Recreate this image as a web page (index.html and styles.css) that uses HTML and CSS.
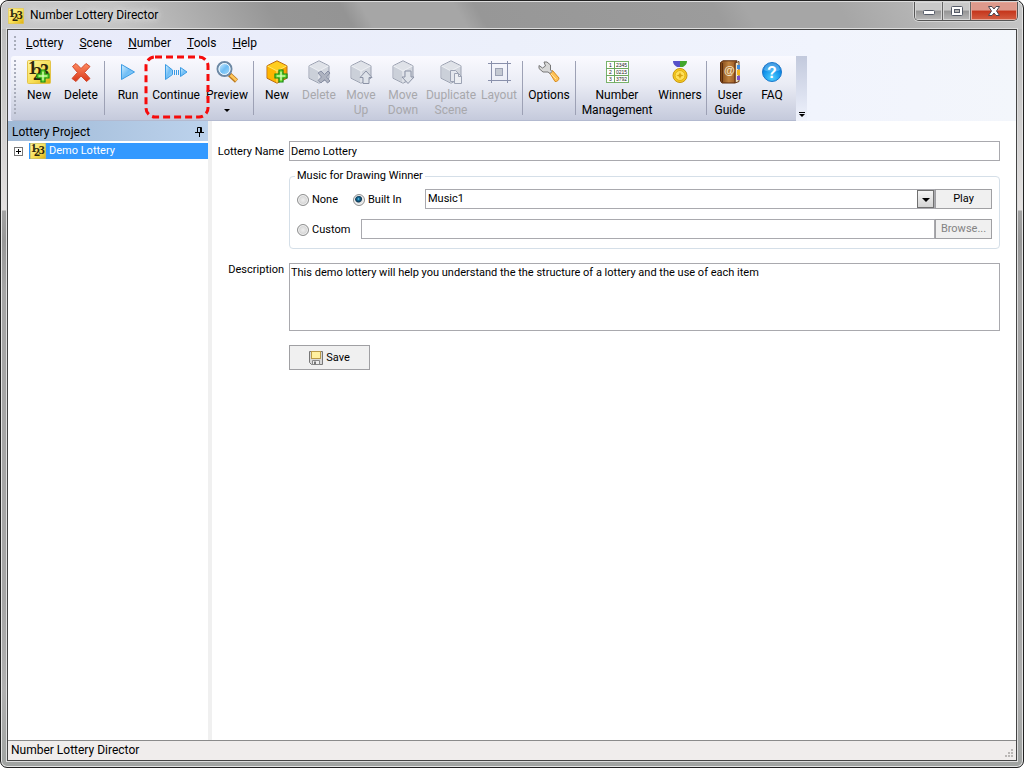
FILE: index.html
```html
<!DOCTYPE html>
<html lang="en">
<head>
<meta charset="utf-8">
<title>Number Lottery Director</title>
<link rel="stylesheet" href="styles.css">
</head>
<body>
<svg class="defs" aria-hidden="true">
  <defs>
    <linearGradient id="gold" x1="0" y1="0" x2="1" y2="1"><stop offset="0" stop-color="#fff6a0"/><stop offset=".6" stop-color="#f6dc50"/><stop offset="1" stop-color="#dcae10"/></linearGradient>
    <linearGradient id="blue" x1="0" y1="0" x2="1" y2="1"><stop offset="0" stop-color="#d4efff"/><stop offset=".5" stop-color="#6fbdf5"/><stop offset="1" stop-color="#a4dafb"/></linearGradient>
    <linearGradient id="red" x1="0" y1="0" x2="0" y2="1"><stop offset="0" stop-color="#ff8a60"/><stop offset="1" stop-color="#d8371a"/></linearGradient>
    <radialGradient id="ball" cx=".5" cy=".8" r=".8"><stop offset="0" stop-color="#4fd0ff"/><stop offset=".6" stop-color="#1292ea"/><stop offset="1" stop-color="#0868c4"/></radialGradient>
    <linearGradient id="leather" x1="0" y1="0" x2="1" y2="0"><stop offset="0" stop-color="#7b4215"/><stop offset=".5" stop-color="#c08340"/><stop offset="1" stop-color="#935020"/></linearGradient>
    <symbol id="logo" viewBox="0 0 24 24">
      <rect x=".5" y=".5" width="23" height="23" rx="1" fill="url(#gold)" stroke="#e3c44a"/>
      <g class="logo-digits"><text x="1" y="14">1</text><text x="6" y="20">2</text><text x="13" y="17">3</text></g>
    </symbol>
    <symbol id="plus" viewBox="0 0 14 14"><path d="M5 1h4v4h4v4H9v4H5V9H1V5h4z" fill="#7be23c" stroke="#158a14" stroke-width="1.2"/><path d="M7 3v8M3 7h8" stroke="#e4ffd0" stroke-width="1"/></symbol>
    <symbol id="cube" viewBox="0 0 24 24">
      <path d="M12 .8 22 5.8v12.4l-10 5-10-5V5.8z" fill="#d2d6de" stroke="#9aa0b0"/>
      <path d="M12 1.5 21.5 6 12 11 2.5 6z" fill="#dfe2e8"/><path d="M2.5 6 12 11v11.5l-9.500-4.800z" fill="#cbd0d9"/>
      <path d="M2.500 6 12 11l9.500-5M12 11v11.500" fill="none" stroke="#eef0f5"/>
    </symbol>
  </defs>
</svg>
<div class="window">
  <header class="titlebar">
    <svg class="icon-16"><use href="#logo"/></svg>
    <h1 class="title">Number Lottery Director</h1>
    <div class="caption-buttons">
      <button class="cap" aria-label="Minimize"><svg width="14" height="10"><rect x="1.500" y="4.500" width="11" height="4" rx="1" fill="#fff" stroke="#555b68"/></svg></button>
      <button class="cap" aria-label="Restore"><svg width="14" height="12"><rect x="1.500" y="1.500" width="11" height="9" rx="1" fill="#fff" stroke="#555b68"/><rect x="4.500" y="4.500" width="5" height="3" fill="#b5b5b5" stroke="#555b68"/></svg></button>
      <button class="cap cap-close" aria-label="Close"><svg width="14" height="12"><path d="M1.500 1.500h3.500l2 2.500 2-2.500h3.500L9.500 6l3 4.500H9L7 8l-2 2.500H1.500l3-4.500z" fill="#fff" stroke="#4a4650"/></svg></button>
    </div>
  </header>
  <div class="client">
    <div class="bars">
      <nav class="menubar">
        <span class="grip"></span>
        <button><u>L</u>ottery</button><button><u>S</u>cene</button><button><u>N</u>umber</button><button><u>T</u>ools</button><button><u>H</u>elp</button>
      </nav>
      <div class="toolrow">
        <div class="toolbar" role="toolbar">
          <span class="grip"></span>
          <button class="tool"><svg class="icon-24"><use href="#logo"/><use href="#plus" x="9" y="9" width="14" height="14"/></svg>New</button>
          <button class="tool"><svg class="icon-24" viewBox="0 0 24 24"><path d="M3.500 6.500 7 3.500l5 5 5-5 4 3-5.500 6 5.500 6-3.500 3L12 16l-5 5.500-4-3 5.500-6z" fill="url(#red)" stroke="#d2492c"/></svg>Delete</button>
          <span class="sep"></span>
          <button class="tool"><svg class="icon-24" viewBox="0 0 24 24"><path d="M5.500 4.500 18.500 12 5.500 19.500z" fill="url(#blue)" stroke="#3a9be4"/></svg>Run</button>
          <button class="tool tool-l"><svg class="icon-24" viewBox="0 0 24 24"><path d="M1.500 4.500 8.500 10v4.500l-7 5z" fill="url(#blue)" stroke="#3a9be4"/><path d="M10.500 10v5M12.500 10v5M14.500 10v5" stroke="#3a9be4"/><path d="M16.500 7.500 23 12l-6.500 4.500z" fill="url(#blue)" stroke="#3a9be4"/></svg>Continue
            <svg class="callout" width="66" height="64" aria-hidden="true"><rect x="2" y="2" width="62" height="60" rx="9" fill="none" stroke="#f60b0b" stroke-width="3" stroke-dasharray="7 4"/></svg></button>
          <button class="tool tool-m"><svg class="icon-24" viewBox="0 0 24 24"><path d="m14.500 14.500 7 6.500" stroke="#b9761c" stroke-width="4.500"/><path d="m15.500 15 6 5.500" stroke="#ffc75a" stroke-width="2.500"/><circle cx="9.500" cy="9" r="7" fill="#b9e2fb" stroke="#6d88a4" stroke-width="2"/><circle cx="9.500" cy="9" r="5.500" fill="url(#blue)" stroke="#f0f8ff"/></svg>Preview<span class="drop"></span></button>
          <span class="sep"></span>
          <button class="tool"><svg class="icon-24" viewBox="0 0 24 24"><path d="M12 .8 22 5.800v12.400l-10 5-10-5V5.800z" fill="#f9a500" stroke="#b86c18"/><path d="M12 1.500 21.500 6 12 11 2.500 6z" fill="#ffce20"/><path d="M2.500 6 12 11v11.500l-9.500-4.800z" fill="#ffb500"/><path d="M2.500 6 12 11l9.500-5M12 11v11.500" fill="none" stroke="#ffeb70"/><use href="#plus" x="9" y="9" width="14" height="14"/></svg>New</button>
          <button class="tool" disabled><svg class="icon-24" viewBox="0 0 24 24"><use href="#cube"/><path d="m11 13 3-2 3.500 3.500L21 11l2 2-3.500 4 3.500 4-2.500 2-3-3.500L14 23l-3-2.500 3.500-3.500z" fill="#aeb3c0" stroke="#888fa4"/></svg>Delete</button>
          <button class="tool" disabled><svg class="icon-24" viewBox="0 0 24 24"><use href="#cube"/><path d="m17 11 6 6.500h-3v6h-6v-6h-3z" fill="#dfe3ea" stroke="#8c93a6"/></svg>Move<br>Up</button>
          <button class="tool" disabled><svg class="icon-24" viewBox="0 0 24 24"><use href="#cube"/><path d="M14 11h6v6h3l-6 6.500-6-6.500h3z" fill="#dfe3ea" stroke="#8c93a6"/></svg>Move<br>Down</button>
          <button class="tool tool-l" disabled><svg class="icon-24" viewBox="0 0 24 24"><use href="#cube"/><path d="M11.500 10.500h5l3 3v8h-8z" fill="#e4e7ee" stroke="#9ca3b4"/><path d="M15.500 13.500h4l3 3v7h-7z" fill="#eceef3" stroke="#9ca3b4"/><path d="M19.500 13.500v3h3" fill="none" stroke="#9ca3b4"/></svg>Duplicate<br>Scene</button>
          <button class="tool" disabled><svg class="icon-24" viewBox="0 0 24 24"><path d="M4.500 1v22M20.500 1v22M1 3.500h23M1 20.500h23" stroke="#8990ab"/><rect x="8.500" y="8.500" width="7" height="7" fill="#c4c9d2" stroke="#9ba1b4"/></svg>Layout</button>
          <span class="sep"></span>
          <button class="tool tool-m"><svg class="icon-24" viewBox="0 0 24 24"><path d="m12.500 12.500 3-2 6.500 7.500c0 2-2 4-4 3.500z" fill="#ffc255" stroke="#d78a1d"/><path d="m14 14 5 5" stroke="#ffe3a3"/><path d="m7 2 3 0 3.500 3v5l1.500 1.500-2 2L11 12H6L2 8.500v-3l3.500 2.500 3-2z" fill="#d8d8d8" stroke="#777"/></svg>Options</button>
          <span class="sep"></span>
          <button class="tool tool-xl"><svg class="icon-24" viewBox="0 0 24 24"><rect x="1.500" y="1.500" width="22" height="21" fill="#fff" stroke="#79b36b"/><path d="M1 8.500h22M1 15.500h22M9.500 1v22" stroke="#6ba75e"/><g class="sheet-digits"><text x="4" y="7">1</text><text x="11" y="7">2345</text><text x="4" y="14">2</text><text x="11" y="14">0215</text><text x="4" y="21">3</text><text x="11" y="21">3792</text></g></svg>Number<br>Management</button>
          <button class="tool tool-m"><svg class="icon-24" viewBox="0 0 24 24"><path d="M5 1h7v6H9C6.500 5.500 5 4 5 1z" fill="#5751c8"/><path d="M12 1h7c0 3-1.500 4.500-4 6h-3z" fill="#42a62c"/><circle cx="12" cy="15.500" r="7" fill="#f7cc20" stroke="#c79510"/><circle cx="12" cy="15.500" r="5" fill="#ffe15a" stroke="#dfae14"/><path d="m12 12 1 2.500 2.500 1-2.500 1-1 2.500-1-2.500-2.500-1 2.500-1z" fill="#d9a411"/></svg>Winners</button>
          <span class="sep"></span>
          <button class="tool"><svg class="icon-24" viewBox="0 0 24 24"><path d="m17 3 4-1.500v20L17 23z" fill="#efe5ca" stroke="#6b3a12"/><path d="M19 5h3v4h-3z" fill="#3b8be0"/><path d="M19 10h3v5h-3z" fill="#f5b520"/><path d="M19 16h3v4h-3z" fill="#7850c8"/><path d="M2.500 2.500 5 .8h14l-2 2V23H4l-1.500-2z" fill="url(#leather)" stroke="#5a2b0c"/><path d="M4.500 3v19" stroke="#5a2b0c"/><text class="at" x="6" y="14">@</text></svg>User<br>Guide</button>
          <button class="tool"><svg class="icon-24" viewBox="0 0 24 24"><circle cx="12" cy="12" r="9.500" fill="url(#ball)" stroke="#1c78cc"/><path d="M4 10a8 7 0 0 1 16 0c-4 2-12 2-16 0z" fill="#8ed4ff" opacity=".45"/><text class="ask" x="12" y="18">?</text></svg>FAQ</button>
        </div>
        <button class="overflow" aria-label="More buttons"><span class="more"></span></button>
      </div>
    </div>
    <div class="main">
      <aside class="sidebar">
        <div class="side-head"><h2>Lottery Project</h2><svg width="9" height="11" aria-label="Pin"><path d="M2.500 6V1.500h4V6M5.500 1v5M0 6.500h9M4.500 7v4" fill="none" stroke="#000"/></svg></div>
        <ul class="tree"><li>
          <button class="expander" aria-label="Expand"><svg width="9" height="9"><rect x=".5" y=".5" width="8" height="8" fill="#fff" stroke="#777"/><path d="M2 4.500h5M4.500 2v5" stroke="#000"/></svg></button>
          <a class="node" href="#"><svg class="icon-16"><use href="#logo"/></svg>Demo Lottery</a></li></ul>
      </aside>
      <form class="form">
        <label class="field-label" for="name">Lottery Name</label>
        <input class="box" id="name" type="text" value="Demo Lottery">
        <fieldset class="music">
          <legend>Music for Drawing Winner</legend>
          <div class="music-row">
            <label class="choice choice-none"><input type="radio" name="music">None</label>
            <label class="choice choice-built"><input type="radio" name="music" checked>Built In</label>
            <span class="combo"><select class="box" aria-label="Built in music"><option>Music1</option></select><span class="combo-arrow"></span></span>
            <button class="push" type="button">Play</button>
          </div>
          <div class="music-row">
            <label class="choice choice-custom"><input type="radio" name="music">Custom</label>
            <input class="box grow" type="text" aria-label="Custom music file">
            <button class="push" type="button" disabled>Browse...</button>
          </div>
        </fieldset>
        <label class="field-label label-top" for="desc">Description</label>
        <textarea class="box desc" id="desc">This demo lottery will help you understand the the structure of a lottery and the use of each item</textarea>
        <button class="push save" type="button"><svg width="14" height="14"><path d="M.5.500h13v13h-11l-2-2z" fill="#d8d8d8" stroke="#777"/><rect x="2.500" y=".5" width="9" height="7" fill="#fff0a0" stroke="#b99a48"/><path d="M3.500 9.500h7v4h-7z" fill="#eee" stroke="#888"/><path d="M5 10.500h2v3H5z" fill="#777"/></svg>Save</button>
      </form>
    </div>
    <footer class="status"><span>Number Lottery Director</span>
      <svg width="9" height="9" aria-hidden="true"><path d="M7 0h2v2H7zM4 3h2v2H4zM7 3h2v2H7zM1 6h2v2H1zM4 6h2v2H4zM7 6h2v2H7z" fill="#bab7b5"/></svg></footer>
  </div>
</div>
</body>
</html>
```

FILE: styles.css
```css
* { box-sizing: border-box; }
html, body { height: 100%; margin: 0; }
body { background: #fff; color: #000; font: 12px/15px Roboto, "Noto Sans", sans-serif; }
button, input, select, textarea { font: inherit; color: inherit; margin: 0; }
button { border: 0; padding: 0; background: none; }
h1, h2 { margin: 0; font-size: inherit; font-weight: normal; }
svg { display: block; flex: none; }
.defs { position: absolute; width: 0; height: 0; }
.icon-16 { width: 16px; height: 16px; }
.icon-24 { width: 24px; height: 24px; }
.logo-digits { font: bold 18px "Liberation Serif", serif; fill: #2c250c; }
.sheet-digits { font: 5px "Liberation Sans", sans-serif; fill: #222; }
.at { font: bold 11px "Liberation Sans", sans-serif; fill: #f5e5c5; }
.ask { font: bold 16px "Liberation Sans", sans-serif; fill: #fff; text-anchor: middle; }

.window {
  display: flex; flex-direction: column; min-height: 100%;
  padding: 0 6px 6px; border: 1px solid #222; border-radius: 8px 8px 7px 7px;
  box-shadow: inset 0 0 0 1px #e4e4e4;
  background: linear-gradient(180deg, #a5a5a5 0, #bdbdbd 30px, #c2c2c2 60px, #e4e1e0 209px, #a3a3a3 210px, #989898 240px, #a6a6a6 290px, #a6a6a6 600px, #b0b0b0 690px, #a0a3a1 100%);
}
.titlebar {
  display: flex; align-items: center; gap: 6px; height: 28px; margin: 0 -5px; padding-left: 6px;
  background: linear-gradient(60deg, #c9c9c9 0, #c4c4c4 12%, #a6a6a6 22%, #969696 27%, #949494 34%, #a6a6a6 36%, #a6a6a6 45%, #979797 47%, #9c9c9c 70%, #a6a6a6 73%, #a6a6a6 82%, #bcbcbc 93%, #c6c6c6 100%);
  border-radius: 7px 7px 0 0;
  border-top: 1px solid #ddd;
}
.title { text-shadow: 0 0 6px #eee, 0 0 8px #ddd; }
.caption-buttons {
  display: flex; align-self: flex-start; margin-left: auto; margin-right: 4px; height: 19px;
  border: 1px solid #555; border-top: 0; border-radius: 0 0 5px 5px; overflow: hidden;
  box-shadow: 0 0 0 1px #d5d5d5;
}
.cap { display: flex; align-items: center; justify-content: center; width: 28px; border-right: 1px solid #666; box-shadow: inset 0 0 0 1px #d6d6d6; background: linear-gradient(#c9c9c9 0 45%, #959595 50%, #b9b9b9); }
.cap-close { width: 46px; border-right: 0; box-shadow: inset 0 0 0 1px #e5a596; background: linear-gradient(#dd998b 0 45%, #c5351b 50%, #d45f43); }

.client { flex: 1; display: flex; flex-direction: column; border: 1px solid #444; box-shadow: 0 0 0 1px #ddd; background: #fff; }
.bars { background: linear-gradient(90deg, #e8eafa 0, #ecf0fb 50%, #f1f4fd 80%, #f3f6fb 100%); }
.menubar { display: flex; align-items: center; gap: 16px; height: 26px; padding-left: 6px; }
.menubar .grip { height: 14px; margin-right: -6px; }
.grip { width: 2px; background: repeating-linear-gradient(#a9adbb 0 2px, transparent 2px 4px); }
.toolrow { display: flex; height: 65px; }
.toolbar { display: flex; padding: 4px 3px 0 3px; border-bottom: 1px solid #b3bad0; border-radius: 3px 0 0 3px; margin-left: 3px; background: linear-gradient(#fafaff, #e9ebf4 45%, #c5cadc); }
.toolbar .grip { height: 54px; margin-right: 2px; }
.tool { position: relative; display: flow-root; width: 42px; text-align: center; white-space: nowrap; align-self: flex-start; }
.tool-m { width: 48px; }
.tool-l { width: 54px; }
.tool-xl { width: 78px; }
.tool > .icon-24 { margin: 0 auto 4px; }
.tool:disabled { color: #a8a8ac; }
.callout { position: absolute; left: -5px; top: -5px; z-index: 1; pointer-events: none; }
.sep { width: 1px; height: 54px; margin: 1px 2px; background: #9da1b5; }
.drop, .more { display: block; width: 0; border: 3px solid transparent; border-top-color: #000; border-bottom: 0; margin: 6px auto 0; }
.overflow { display: flex; align-items: flex-end; justify-content: center; width: 11px; background: linear-gradient(#c2c9dc, #dce1f0 60%, #f0f3fc); }
.more { margin: 0 0 4px; }
.more::before { content: ""; display: block; width: 6px; height: 1px; margin: -5px 0 4px -3px; background: #000; }

.main { flex: 1; display: flex; font-size: 11px; line-height: 14px; }
.sidebar { width: 204px; border-right: 4px solid #f0f0f0; }
.side-head { display: flex; align-items: center; justify-content: space-between; height: 20px; padding: 1px 4px 0; font-size: 12px; background: linear-gradient(90deg, #9fb9d6, #bcd2ec); }
.tree { list-style: none; margin: 2px 0 0; padding: 0; }
.tree li { display: flex; align-items: center; padding-left: 6px; gap: 6px; }
.node { flex: 1; display: flex; align-items: center; gap: 3px; height: 16px; padding-left: 1px; background: #3399ff; color: #fff; text-decoration: none; }
.form { flex: 1; display: grid; grid-template-columns: 72px 1fr; column-gap: 5px; align-content: start; padding: 20px 16px 0 0; min-width: 0; }
.field-label { text-align: right; padding-top: 4px; white-space: nowrap; }
.label-top { padding-top: 0; }
.box { width: 100%; height: 20px; padding: 0 1px; border: 1px solid #a9a9ae; border-radius: 0; background: #fff; outline: 0; }
.music { grid-column: 2; margin: 8px 0 14px; padding: 6px 7px 9px; border: 1px solid #d5dfe8; border-radius: 4px; min-width: 0; }
.music legend { padding: 0 2px; margin-left: -2px; }
.music-row { display: flex; height: 20px; }
.music-row + .music-row { margin-top: 10px; }
.choice { display: flex; align-items: center; gap: 3px; padding-top: 1px; }
.choice-none { width: 56px; }
.choice-built { width: 72px; }
.choice-custom { width: 64px; }
.choice input { appearance: none; width: 12px; height: 12px; border: 1px solid #8e8f8f; border-radius: 50%; background: radial-gradient(circle, #eee, #ccc 80%); box-shadow: inset 0 0 0 1px #f4f4f4; }
.choice input:checked { background: radial-gradient(circle at 45% 40%, #8be0f8 0, #1a79a8 1px, #0d3652 3px, #e4e4e4 4px); }
.combo { position: relative; flex: 1; }
.combo select { appearance: none; display: block; padding-left: 2px; }
.combo-arrow { position: absolute; right: 1px; top: 1px; width: 17px; height: 18px; border: 1px solid #707070; background: linear-gradient(#f4f4f4, #d4d4d4); pointer-events: none; }
.combo-arrow::after { content: ""; position: absolute; left: 4px; top: 7px; border: 4px solid transparent; border-top-color: #000; border-bottom: 0; }
.grow { flex: 1; }
.push { width: 57px; height: 20px; border: 1px solid #a0a0a3; background: #f0f0f0; }
.push:disabled { color: #838383; }
.desc { display: block; height: 68px; padding: 2px 1px; resize: none; }
.save { grid-column: 2; display: flex; align-items: center; justify-content: center; gap: 3px; width: 81px; height: 25px; margin-top: 14px; }
.status { display: flex; align-items: center; justify-content: space-between; height: 20px; padding: 0 3px; border-top: 1px solid #8b8b8b; background: #f0edec; font-size: 12px; }
.status svg { align-self: flex-end; margin-bottom: 2px; }
```
